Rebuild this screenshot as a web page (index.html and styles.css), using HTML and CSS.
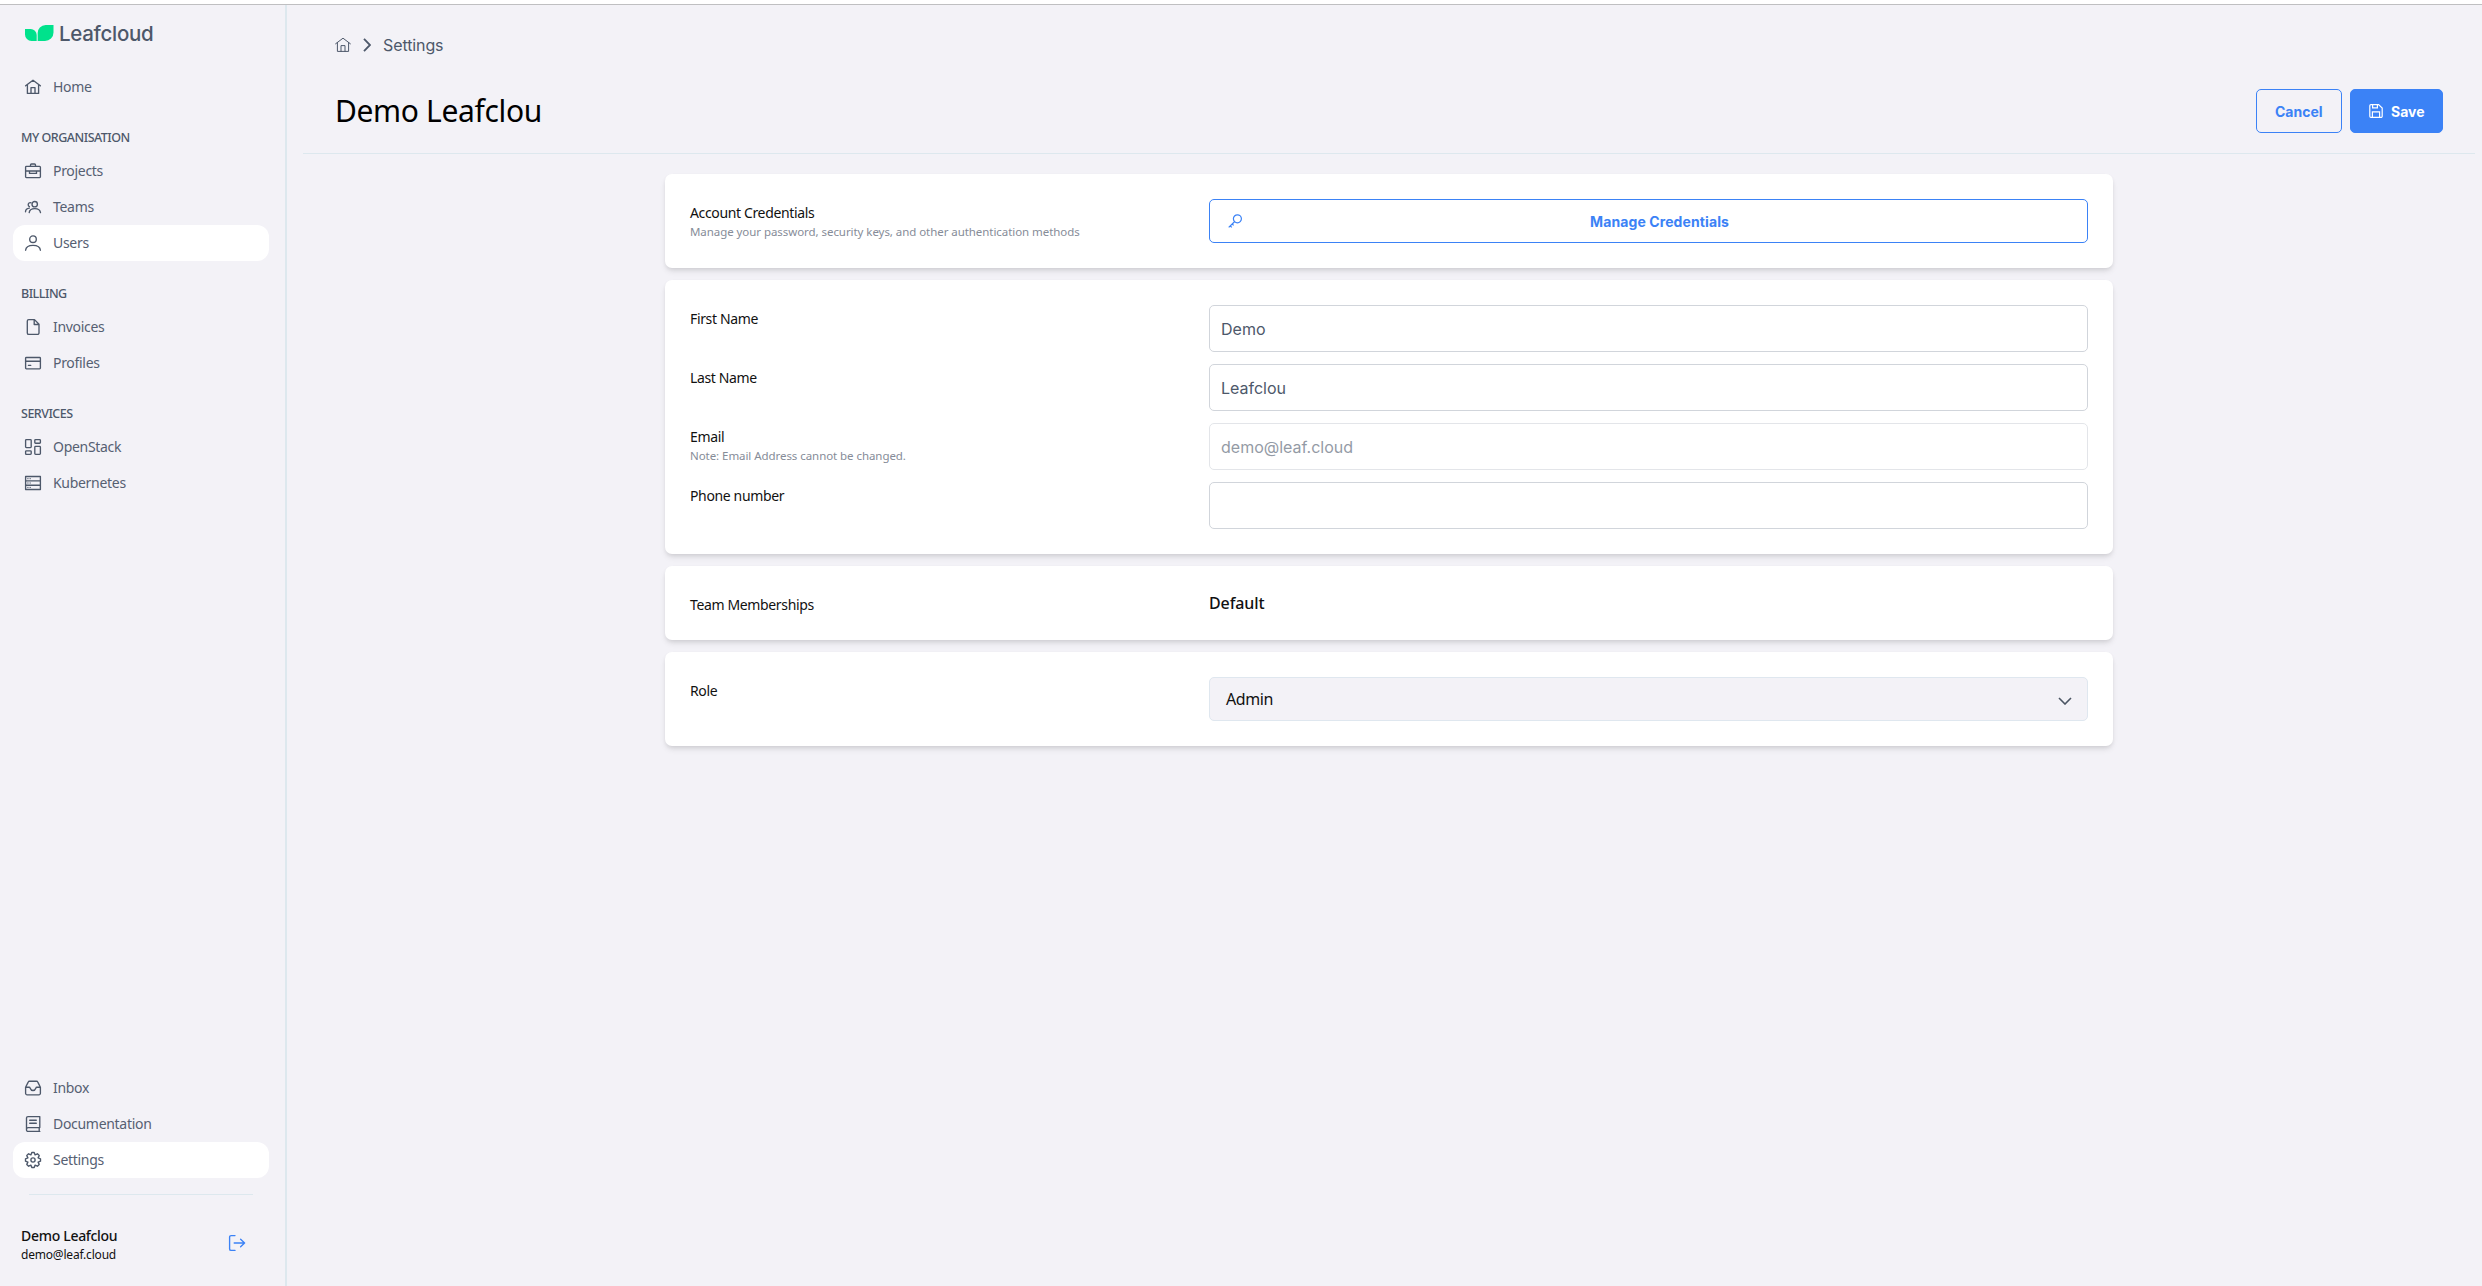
FILE: index.html
```html
<!DOCTYPE html>
<html lang="en">
<head>
  <meta charset="UTF-8">
  <meta name="viewport" content="width=device-width, initial-scale=1.0">
  <title>Leafcloud - Settings</title>
  <link rel="stylesheet" href="styles.css">
</head>
<body>
  <div class="top-strip"></div>

  <div class="layout">
    <aside class="sidebar">
      <a class="logo" href="#">
        <svg width="29" height="16" viewBox="0 0 29 16" fill="#00e28c">
          <path d="M0 4h5.5A6 6 0 0 1 11.7 10v6H6.5A6.5 6.5 0 0 1 0 9.5z"/>
          <path d="M12.7 16V8.5A8 8 0 0 1 20.7 0h7.8v7.5A8.5 8.5 0 0 1 20 16z"/>
        </svg>
        <span>Leafcloud</span>
      </a>

      <nav class="nav">
        <a class="nav-item" href="#">
          <svg class="icon" viewBox="0 0 16 16"><path d="M.6 6.8 8 1.2l7.4 5.6M2.4 5.6v8.8h11.2V5.6M6 14.4V8.6h4v5.8"/></svg>
          Home
        </a>

        <h3 class="nav-title">MY ORGANISATION</h3>
        <a class="nav-item" href="#">
          <svg class="icon" viewBox="0 0 16 16"><path d="M1.4 3.4h13.2a.8.8 0 0 1 .8.8v9.6a.8.8 0 0 1-.8.8H1.4a.8.8 0 0 1-.8-.8V4.2a.8.8 0 0 1 .8-.8zM5.5 3.4V2a1 1 0 0 1 1-1h3a1 1 0 0 1 1 1v1.4M.6 8h14.8M4.5 8v2.4h7V8"/></svg>
          Projects
        </a>
        <a class="nav-item" href="#">
          <svg class="icon" viewBox="0 0 16 16"><circle cx="9.7" cy="5.2" r="2.7"/><path d="M4.2 13.6c.3-2.7 2.6-4 5.6-4s5.3 1.3 5.7 4M6 3.8C4.5 3.3 3.2 4.3 3.2 5.7c0 .9.5 1.6 1.2 1.9M.5 12.8c.1-2.2 1.4-3.5 3.9-3.7"/></svg>
          Teams
        </a>
        <a class="nav-item active" href="#">
          <svg class="icon" viewBox="0 0 16 16"><circle cx="8" cy="4.2" r="3.3"/><path d="M.6 15.2c.3-3.4 3.2-4.9 7.4-4.9s7.1 1.5 7.4 4.9"/></svg>
          Users
        </a>

        <h3 class="nav-title">BILLING</h3>
        <a class="nav-item" href="#">
          <svg class="icon" viewBox="0 0 16 16"><path d="M3.8.6h5.7L14 5.2v8.7a1.5 1.5 0 0 1-1.5 1.5H3.8a1.5 1.5 0 0 1-1.5-1.5V2.1A1.5 1.5 0 0 1 3.8.6zM9.2.8v4.7h4.7"/></svg>
          Invoices
        </a>
        <a class="nav-item" href="#">
          <svg class="icon" viewBox="0 0 16 16"><rect x=".6" y="2.5" width="14.8" height="11.3" rx=".8"/><path d="M.6 6.2h14.8M3.4 10.3h2.4"/></svg>
          Profiles
        </a>

        <h3 class="nav-title">SERVICES</h3>
        <a class="nav-item" href="#">
          <svg class="icon" viewBox="0 0 16 16"><rect x=".6" y=".6" width="5.6" height="8" rx=".8"/><rect x="9.8" y=".6" width="5.6" height="3.6" rx=".8"/><rect x=".6" y="11.8" width="5.6" height="3.6" rx=".8"/><rect x="9.8" y="7.4" width="5.6" height="8" rx=".8"/></svg>
          OpenStack
        </a>
        <a class="nav-item" href="#">
          <svg class="icon" viewBox="0 0 16 16"><path d="M.6 1.5h14.8v13H.6zM.6 5.8h14.8M.6 10.2h14.8"/><path d="M2.6 3.7h.6M4.9 3.7h.6M2.6 8h.6M4.9 8h.6M2.6 12.4h.6M4.9 12.4h.6" stroke-width=".9"/></svg>
          Kubernetes
        </a>
      </nav>

      <nav class="nav nav-bottom">
        <a class="nav-item" href="#">
          <svg class="icon" viewBox="0 0 16 16"><path d="M.6 7.2 3.2 2.1A1.5 1.5 0 0 1 4.5 1.2h7a1.5 1.5 0 0 1 1.3.9l2.6 5.1v6.1a1.5 1.5 0 0 1-1.5 1.5H2.1a1.5 1.5 0 0 1-1.5-1.5zM.6 7.2h3.6c.7 0 .8.5 1 1.1.4 1.3 1.4 2.2 2.8 2.2s2.4-.9 2.8-2.2c.2-.6.3-1.1 1-1.1h3.6"/></svg>
          Inbox
        </a>
        <a class="nav-item" href="#">
          <svg class="icon" viewBox="0 0 16 16"><path d="M14.8 11.6V.6H3A1.500 1.500 0 0 0 1.5 2.1V14A1.4 1.4 0 0 0 3 15.4h11.8M14.8 11.6H3.2a1.7 1.7 0 0 0-1.7 1.7M14.2 11.6v3.8M4.7 4.200h6.600M4.700 7.200h6.600"/></svg>
          Documentation
        </a>
        <a class="nav-item active" href="#">
          <svg class="icon" viewBox="0 0 16 16"><circle cx="8" cy="8" r="2.1"/><path d="M15.5 6.8v2.4l-2.4.9 1.1 2.3-1.8 1.8-2.3-1.1-.9 2.4H6.800l-.9-2.400-2.300 1.100-1.800-1.800 1.100-2.300-2.400-.9V6.800l2.400-.9-1.100-2.300 1.800-1.800 2.300 1.100.9-2.400h2.400l.9 2.400 2.300-1.100 1.800 1.800-1.100 2.300z"/></svg>
          Settings
        </a>
      </nav>

      <div class="account">
        <div>
          <div class="account-name">Demo Leafclou</div>
          <div class="account-email">demo@leaf.cloud</div>
        </div>
        <a class="logout" href="#">
          <svg class="icon" viewBox="0 0 16 16"><path d="M6 .6H2.1A1.5 1.5 0 0 0 .6 2.1v11.8a1.5 1.5 0 0 0 1.5 1.5H6M5.2 8h10.4M11.6 4.2 15.6 8l-4 3.8"/></svg>
        </a>
      </div>
    </aside>

    <main class="main">
      <header class="page-header">
        <div class="breadcrumb">
          <svg class="icon" viewBox="0 0 16 16"><path d="M.6 6.8 8 1.2l7.4 5.6M2.4 5.6v8.8h11.2V5.6M6 14.4V8.6h4v5.8"/></svg>
          <svg class="crumb-arrow" viewBox="0 0 8 14"><path d="m1 .8 6 6.2-6 6.2"/></svg>
          <span>Settings</span>
        </div>
        <div class="title-row">
          <h1>Demo Leafclou</h1>
          <div class="actions">
            <button class="btn btn-cancel">Cancel</button>
            <button class="btn btn-primary">
              <svg class="btn-icon" viewBox="0 0 14 14"><path d="M2 .6h7.6L13.2 4v8.2a1.2 1.2 0 0 1-1.2 1.2H2A1.2 1.2 0 0 1 .8 12.2V1.8A1.2 1.2 0 0 1 2 .6zM3.6.6v3.2h4.8V.6M3.4 13.4V7.8h7.2v5.6"/></svg>
              Save
            </button>
          </div>
        </div>
      </header>

      <div class="cards">
        <section class="card">
          <div class="row">
            <div class="label">
              <label>Account Credentials</label>
              <small>Manage your password, security keys, and other authentication methods</small>
            </div>
            <button class="btn btn-wide">
              <svg class="btn-icon" viewBox="0 0 14 14"><circle cx="9.4" cy="4.8" r="4"/><path d="M6.5 7.7.7 13.4M2 11.8l1.8 1.6M4.2 10l1.4 1.4"/></svg>
              <span>Manage Credentials</span>
            </button>
          </div>
        </section>

        <section class="card">
          <div class="row">
            <div class="label"><label>First Name</label></div>
            <input class="input" type="text" value="Demo">
          </div>
          <div class="row">
            <div class="label"><label>Last Name</label></div>
            <input class="input" type="text" value="Leafclou">
          </div>
          <div class="row">
            <div class="label">
              <label>Email</label>
              <small>Note: Email Address cannot be changed.</small>
            </div>
            <input class="input" type="text" value="demo@leaf.cloud" disabled>
          </div>
          <div class="row">
            <div class="label"><label>Phone number</label></div>
            <input class="input" type="text">
          </div>
        </section>

        <section class="card">
          <div class="row">
            <div class="label"><label>Team Memberships</label></div>
            <div class="team">Default</div>
          </div>
        </section>

        <section class="card">
          <div class="row">
            <div class="label"><label>Role</label></div>
            <div class="select">
              <span>Admin</span>
              <svg class="select-arrow" viewBox="0 0 14 8"><path d="m1 1 6 6 6-6"/></svg>
            </div>
          </div>
        </section>
      </div>
    </main>
  </div>
</body>
</html>
```
FILE: styles.css
```css
:root {
  --bg: #f3f2f7;
  --line: #dde8ee;
  --text: #4d586a;
  --blue: #3b82f6;
  --font: "Noto Sans", sans-serif;
  --font-ui: Inter, sans-serif;
}

* {
  box-sizing: border-box;
}

body {
  margin: 0;
  height: 100vh;
  display: flex;
  flex-direction: column;
  background: var(--bg);
  color: #111;
  font-family: var(--font);
  overflow: hidden;
}

a {
  color: inherit;
  text-decoration: none;
}

.top-strip {
  height: 5px;
  background: #fff;
  border-bottom: 1px solid #bfbfc1;
}

.layout {
  flex: 1;
  display: flex;
}

/* Sidebar */
.sidebar {
  width: 287px;
  display: flex;
  flex-direction: column;
  border-right: 2px solid var(--line);
  padding: 16px 16px 22px 13px;
}

.logo {
  display: flex;
  align-items: center;
  gap: 5px;
  height: 24px;
  padding-left: 12px;
  font-family: var(--font-ui);
  font-size: 20.5px;
  font-weight: 500;
  letter-spacing: -0.3px;
  color: var(--text);
}

.nav {
  margin-top: 24px;
}

.nav-bottom {
  margin-top: auto;
}

.nav-item {
  display: flex;
  align-items: center;
  gap: 12px;
  height: 36px;
  padding: 0 12px 1px;
  border-radius: 12px;
  font-size: 14px;
  letter-spacing: -0.3px;
  color: #566072;
}

.nav-item .icon {
  margin-top: 1px;
  color: var(--text);
}

.nav-item.active {
  background: #fff;
}

.nav-title {
  margin: 0;
  padding: 24px 8px 6px;
  line-height: 18px;
  font-size: 12.5px;
  font-weight: 500;
  letter-spacing: -0.5px;
  color: var(--text);
}

.icon {
  width: 16px;
  height: 16px;
  overflow: visible;
  fill: none;
  stroke: currentColor;
  stroke-width: 1.35;
  stroke-linejoin: round;
  stroke-linecap: round;
}

.account {
  display: flex;
  justify-content: space-between;
  align-items: center;
  margin: 16px 16px 0;
  padding-top: 31px;
  border-top: 1px solid var(--line);
}

.account > div {
  margin-left: -8px;
}

.account-name {
  font-size: 14px;
  font-weight: 500;
  line-height: 20px;
  letter-spacing: -0.3px;
}

.account-email {
  font-size: 12px;
  line-height: 18px;
  letter-spacing: -0.2px;
}

.logout {
  padding-right: 8px;
  color: var(--blue);
}

/* Page header */
.main {
  flex: 1;
  padding: 0 7px 0 16px;
}

.page-header {
  height: 149px;
  padding: 28px 32px 0;
  border-bottom: 1px solid var(--line);
}

.breadcrumb {
  display: flex;
  align-items: center;
  height: 24px;
  font-family: var(--font-ui);
  font-size: 16px;
  letter-spacing: -0.1px;
  color: var(--text);
}

.breadcrumb .icon {
  stroke-width: 1;
}

.crumb-arrow {
  width: 8px;
  height: 14px;
  margin: 0 12px;
  fill: none;
  stroke: currentColor;
  stroke-width: 1.8;
}

.title-row {
  display: flex;
  justify-content: space-between;
  align-items: center;
  height: 44px;
  margin-top: 32px;
}

.title-row h1 {
  margin: 0;
  padding-bottom: 1px;
  font-size: 30px;
  font-weight: 400;
  letter-spacing: -0.35px;
  color: #000;
}

.actions {
  display: flex;
  gap: 8px;
}

.btn {
  display: flex;
  align-items: center;
  gap: 8px;
  height: 44px;
  padding: 0 18px;
  border: 1px solid var(--blue);
  border-radius: 5px;
  background: none;
  color: var(--blue);
  font-family: var(--font-ui);
  font-size: 14px;
  font-weight: 700;
}

.btn-cancel {
  width: 86px;
}

.btn-primary {
  width: 93px;
  background: var(--blue);
  color: #fff;
}

.btn-icon {
  width: 14px;
  height: 14px;
  flex: none;
  fill: none;
  stroke: currentColor;
  stroke-width: 1.2;
}

/* Form cards */
.cards {
  width: 1448px;
  margin: 20px auto 0;
  display: flex;
  flex-direction: column;
  gap: 12px;
}

.card {
  display: flex;
  flex-direction: column;
  gap: 12px;
  padding: 25px;
  border-radius: 7px;
  background: #fff;
  box-shadow: 0 4px 6px -1px rgba(0, 0, 0, 0.1), 0 2px 4px -1px rgba(0, 0, 0, 0.08);
}

.row {
  display: flex;
}

.row > :last-child {
  flex: 1;
}

.label {
  width: 519px;
  padding-top: 4px;
}

.label label,
.label small {
  display: block;
}

.label label {
  font-size: 14px;
  line-height: 20px;
  letter-spacing: -0.36px;
}

.label small {
  font-size: 11.5px;
  line-height: 18px;
  letter-spacing: -0.06px;
  color: #868c98;
}

.btn-wide span {
  flex: 1;
  text-align: center;
  letter-spacing: 0.1px;
}

.input {
  height: 47px;
  padding: 0 11px;
  border: 1px solid #d1d5db;
  border-radius: 5px;
  background: #fff;
  font-family: var(--font-ui);
  font-size: 16px;
  color: var(--text);
}

.input:disabled {
  opacity: 0.6;
}

.team {
  line-height: 24px;
  font-size: 16px;
  font-weight: 500;
  letter-spacing: -0.1px;
}

.select {
  display: flex;
  justify-content: space-between;
  align-items: center;
  height: 44px;
  padding: 0 15px 0 16px;
  border: 1px solid #dfe7ef;
  border-radius: 5px;
  background: var(--bg);
  font-size: 16px;
  letter-spacing: -0.4px;
}

.select-arrow {
  width: 14px;
  height: 8px;
  margin-top: 3px;
  fill: none;
  stroke: #4b5563;
  stroke-width: 1.6;
}
```
